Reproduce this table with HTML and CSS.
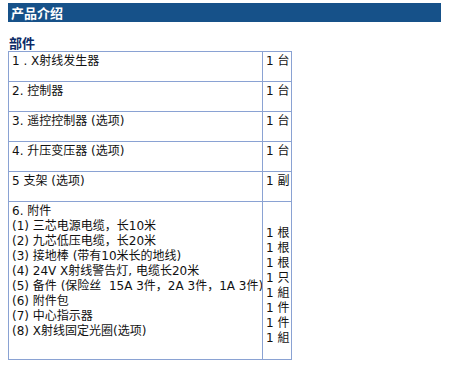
FILE: index.html
```html
<!DOCTYPE html>
<html>
<head>
<meta charset="utf-8">
<link rel="stylesheet" href="styles.css">
</head>
<body>
<div class="page">
  <div class="bar">产品介绍</div>
  <div class="sub">部件</div>
  <table class="parts">
    <tr><td class="name">1 . X射线发生器</td><td class="qty">1 台</td></tr>
    <tr><td class="name">2. 控制器</td><td class="qty">1 台</td></tr>
    <tr><td class="name">3. 遥控控制器&nbsp;(选项)</td><td class="qty">1 台</td></tr>
    <tr><td class="name">4. 升压变压器&nbsp;(选项)</td><td class="qty">1 台</td></tr>
    <tr><td class="name">5 支架&nbsp;(选项)</td><td class="qty">1 副</td></tr>
    <tr class="big">
      <td class="name">6. 附件<br>(1) 三芯电源电缆，长10米<br>(2) 九芯低压电缆，长20米<br>(3) 接地棒&nbsp;(带有10米长的地线)<br>(4) 24V X射线警告灯, 电缆长20米<br>(5) 备件&nbsp;(保险丝&nbsp; 15A 3件，2A 3件，1A 3件)<br>(6) 附件包<br>(7) 中心指示器<br>(8) X射线固定光圈(选项)</td>
      <td class="qty list">1 根<br>1 根<br>1 根<br>1 只<br>1 組<br>1 件<br>1 件<br>1 組</td>
    </tr>
  </table>
</div>
</body>
</html>
```
FILE: styles.css
```css
html, body {
  margin: 0;
  padding: 0;
  background: #fff;
}
.page {
  padding: 3px 12px 0 8px;
  font-family: "DejaVu Sans", Verdana, "Noto Sans CJK SC", sans-serif;
  font-size: 12px;
  color: #111;
}
.bar {
  background: #165189;
  color: #fff;
  font-weight: bold;
  font-size: 13px;
  line-height: 19px;
  height: 19px;
  padding-left: 3px;
  font-family: "Noto Sans CJK SC", sans-serif;
}
.sub {
  margin-top: 14px;
  font-family: "Noto Sans CJK SC", sans-serif;
  font-weight: bold;
  font-size: 13px;
  line-height: 14px;
  height: 15px;
  color: #0b2a66;
  padding-left: 1px;
}
.parts {
  border-collapse: collapse;
  width: 284px;
  table-layout: fixed;
}
.parts td {
  border: 1px solid #8aa2d3;
  vertical-align: top;
  line-height: 15px;
  padding: 2px 3px 12px 3px;
  white-space: nowrap;
  overflow: hidden;
  font-family: "DejaVu Sans", Verdana, "Noto Sans CJK SC", sans-serif;
  font-size: 12px;
}
.parts td.name {
  width: 247px;
  padding-left: 3px;
}
.parts td.qty {
  padding-left: 3px;
  padding-right: 0;
}
.parts tr.big td.name {
  padding-bottom: 20px;
}
.parts td.list {
  padding-top: 24px;
}
```
